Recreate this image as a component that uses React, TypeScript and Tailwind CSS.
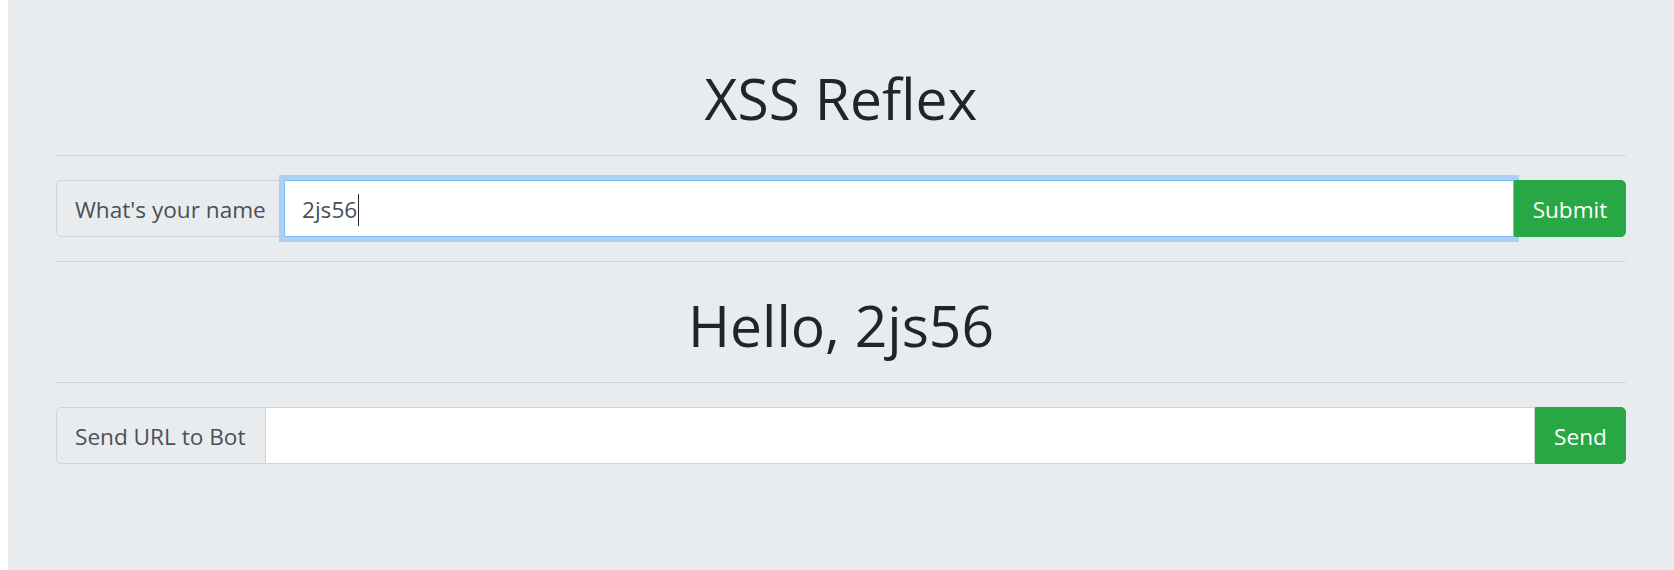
export default function App() {
    return (
        <div className="min-h-screen bg-white pl-2" style={{ fontFamily: '"Open Sans", "Noto Sans", sans-serif' }}>
            <div className="min-h-screen bg-[#e9ecef] px-12 pt-[62px]">
                <h1 className="text-center text-[57px] font-normal leading-[72px] text-[#212529]">XSS Reflex</h1>
                <hr className="mt-[21px] border-0 border-t border-[#d2d4d7]" />

                <div className="mt-6 flex h-[57px] text-[22.6px]">
                    <div className="flex w-[229px] shrink-0 items-center rounded-l-[5px] border border-[#ced4da] bg-[#e9ecef] pl-[18px] pt-[2px] text-[#495057]">
                        What's your name
                    </div>
                    <div className="relative z-10 -ml-px flex flex-1 items-center border border-[#80bdff] bg-white pl-[17px] pt-[2px] text-[#495057] shadow-[0_0_0_5px_#afd0f3]">
                        <span>2js56</span>
                        <span className="ml-px h-[32px] w-px bg-[#212529]"></span>
                    </div>
                    <button className="relative z-20 flex w-[112px] shrink-0 items-center justify-center rounded-r-[5px] border border-[#28a745] bg-[#28a745] pt-[2px] text-white">
                        Submit
                    </button>
                </div>

                <hr className="mt-6 border-0 border-t border-[#d2d4d7]" />
                <h2 className="mt-[27px] text-center text-[57px] font-normal leading-[72px] text-[#212529]">Hello, 2js56</h2>
                <hr className="mt-[21px] border-0 border-t border-[#d2d4d7]" />

                <div className="mt-6 flex h-[57px] text-[22.6px]">
                    <div className="flex w-[210px] shrink-0 items-center rounded-l-[5px] border border-[#ced4da] bg-[#e9ecef] pl-[18px] pt-[2px] text-[#495057]">
                        Send URL to Bot
                    </div>
                    <div className="-ml-px flex-1 border border-[#ced4da] bg-white"></div>
                    <button className="flex w-[91px] shrink-0 items-center justify-center rounded-r-[5px] border border-[#28a745] bg-[#28a745] pt-[2px] text-white">
                        Send
                    </button>
                </div>
            </div>
        </div>
    )
}
